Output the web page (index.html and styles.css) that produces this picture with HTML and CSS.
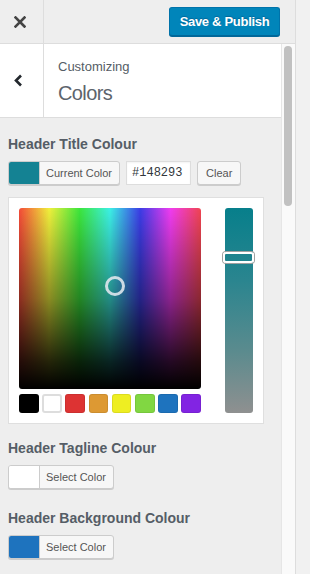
FILE: index.html
```html
<!DOCTYPE html>
<html lang="en">

<head>
    <meta charset="UTF-8">
    <meta name="viewport" content="width=device-width, initial-scale=1.0">
    <title>Customizing Colors</title>
    <link rel="stylesheet" href="styles.css">
</head>

<body>
    <div class="customizer">
        <header class="topbar">
            <button class="close-btn" aria-label="Close">
                <svg width="12" height="12" viewBox="0 0 12 12">
                    <path d="M1.5 1.5 L10.5 10.5 M10.5 1.5 L1.5 10.5" stroke="#444" stroke-width="2.6" stroke-linecap="square" fill="none" />
                </svg>
            </button>
            <button class="publish-btn">Save &amp; Publish</button>
        </header>

        <div class="panel">
            <div class="panel-content">
                <div class="section-head">
                    <button class="back-btn" aria-label="Back">
                        <svg width="9" height="13" viewBox="0 0 9 13">
                            <path d="M7 1.5 L2 6.5 L7 11.5" stroke="#23282d" stroke-width="2.6" fill="none" />
                        </svg>
                    </button>
                    <div class="section-title">
                        <span class="crumb">Customizing</span>
                        <h2>Colors</h2>
                    </div>
                </div>

                <div class="controls">
                    <!-- open picker -->
                    <div class="control is-open">
                        <h3 class="control-label">Header Title Colour</h3>
                        <div class="picker-row">
                            <button class="color-result">
                                <span class="swatch" style="background: #148293"></span>
                                <span class="result-text">Current Color</span>
                            </button>
                            <input class="hex-input" type="text" value="#148293">
                            <button class="small-btn">Clear</button>
                        </div>
                        <div class="picker-box">
                            <div class="picker-main">
                                <div class="picker-square">
                                    <span class="picker-dot"></span>
                                </div>
                                <div class="palette">
                                    <span class="pal" style="background: #000000"></span>
                                    <span class="pal pal-white" style="background: #ffffff"></span>
                                    <span class="pal" style="background: #dd3333"></span>
                                    <span class="pal" style="background: #dd9933"></span>
                                    <span class="pal" style="background: #eeee22"></span>
                                    <span class="pal" style="background: #81d742"></span>
                                    <span class="pal" style="background: #1e73be"></span>
                                    <span class="pal" style="background: #8224e3"></span>
                                </div>
                            </div>
                            <div class="picker-strip">
                                <span class="strip-handle"></span>
                            </div>
                        </div>
                    </div>

                    <div class="control">
                        <h3 class="control-label">Header Tagline Colour</h3>
                        <button class="color-result">
                            <span class="swatch" style="background: #ffffff"></span>
                            <span class="result-text">Select Color</span>
                        </button>
                    </div>

                    <div class="control">
                        <h3 class="control-label">Header Background Colour</h3>
                        <button class="color-result">
                            <span class="swatch" style="background: #1e73be"></span>
                            <span class="result-text">Select Color</span>
                        </button>
                    </div>
                </div>
            </div>

            <div class="scrollbar">
                <div class="scroll-thumb"></div>
            </div>
        </div>
    </div>
</body>

</html>
```

FILE: styles.css
```css
* {
    box-sizing: border-box;
}

body {
    margin: 0;
    height: 574px;
    overflow: hidden;
    background: #f1f1f1;
    font-family: "Liberation Sans", Arial, sans-serif;
}

button {
    font-family: inherit;
    cursor: pointer;
}

.customizer {
    width: 296px;
    height: 574px;
    background: #eee;
    border-right: 1px solid #ddd;
    display: flex;
    flex-direction: column;
}

/* top bar */

.topbar {
    height: 44px;
    flex-shrink: 0;
    border-bottom: 1px solid #ddd;
    display: flex;
    align-items: center;
    justify-content: space-between;
    padding-right: 15px;
}

.close-btn {
    width: 44px;
    height: 43px;
    padding: 0 0 0 14px;
    border: 0;
    border-right: 1px solid #ddd;
    background: transparent;
    display: flex;
    align-items: center;
}

.publish-btn {
    width: 111px;
    height: 29px;
    padding: 0;
    background: #0085ba;
    border: 1px solid #0073aa;
    border-bottom-color: #006799;
    border-radius: 3px;
    box-shadow: 0 1px 0 #006799;
    color: #fff;
    font-size: 13px;
    font-weight: bold;
    letter-spacing: -0.3px;
    text-shadow: 0 -1px 1px #006799;
}

/* panel */

.panel {
    flex: 1;
    min-height: 0;
    display: flex;
}

.panel-content {
    width: 281px;
    flex-shrink: 0;
}

.scrollbar {
    width: 14px;
    background: #fafafa;
    border-left: 1px solid #e6e6e6;
    padding: 2px 0 0 2px;
}

.scroll-thumb {
    width: 8px;
    height: 160px;
    border-radius: 4px;
    background: #c1c1c1;
}

.section-head {
    height: 74px;
    display: flex;
    background: #fff;
    border-bottom: 1px solid #ddd;
}

.back-btn {
    width: 44px;
    padding: 0 0 0 14px;
    border: 0;
    border-right: 1px solid #ddd;
    background: transparent;
    display: flex;
    align-items: center;
}

.section-title {
    padding: 14px 0 0 14px;
    color: #555d66;
}

.crumb {
    display: block;
    font-size: 13px;
    line-height: 18px;
}

.section-title h2 {
    margin: 4px 0 0;
    font-size: 20px;
    line-height: 26px;
    font-weight: normal;
    letter-spacing: -0.6px;
    color: #5d646c;
}

/* controls */

.controls {
    padding: 17px 0 0 8px;
}

.control {
    margin-bottom: 20px;
}

.control.is-open {
    margin-bottom: 15px;
}

.control-label {
    margin: 0 0 8px;
    font-size: 14px;
    line-height: 18px;
    font-weight: bold;
    color: #555d66;
}

.picker-row {
    display: flex;
    gap: 6px;
}

.color-result {
    width: max-content;
    height: 24px;
    padding: 0;
    display: flex;
    align-items: stretch;
    border: 1px solid #ccc;
    border-radius: 3px;
    background: #f7f7f7;
    box-shadow: 0 1px 0 #ccc;
    overflow: hidden;
}

.swatch {
    width: 31px;
    border-right: 1px solid #ccc;
}

.result-text {
    padding: 0 7px 0 6px;
    font-size: 11px;
    line-height: 22px;
    color: #555;
}

.hex-input {
    width: 65px;
    height: 24px;
    padding: 0 5px;
    border: 1px solid #ddd;
    background: #fff;
    box-shadow: inset 0 1px 2px rgba(0, 0, 0, 0.05);
    font-family: "Liberation Mono", "DejaVu Sans Mono", monospace;
    font-size: 12px;
    color: #32373c;
    outline: none;
}

.small-btn {
    height: 24px;
    padding: 0 8px;
    border: 1px solid #ccc;
    border-radius: 3px;
    background: #f7f7f7;
    box-shadow: 0 1px 0 #ccc;
    font-size: 11px;
    color: #555;
}

/* colour picker */

.picker-box {
    width: 256px;
    margin-top: 12px;
    padding: 10px;
    border: 1px solid #dfdfdf;
    background: #fff;
    display: flex;
    gap: 24px;
}

.picker-main {
    width: 182px;
}

.picker-square {
    position: relative;
    height: 181px;
    border-radius: 3px;
    background:
        linear-gradient(to bottom, rgba(0, 0, 0, 0) 0%, rgba(0, 0, 0, 0.42) 50%, rgba(0, 0, 0, 0.85) 85%, #000 100%),
        linear-gradient(to right, #f44a38 0%, #f0f03c 16.6%, #3ce63c 33.3%, #3cf0e6 50%, #3c3ce6 66.6%, #f03cf0 83.3%, #f04450 100%);
}

.picker-dot {
    position: absolute;
    left: 86px;
    top: 68px;
    width: 20px;
    height: 20px;
    border: 3px solid rgba(222, 230, 236, 0.9);
    border-radius: 50%;
}

.palette {
    display: flex;
    gap: 3.5px;
    margin-top: 5px;
}

.pal {
    flex: 1;
    height: 19px;
    border-radius: 3px;
    box-shadow: inset 0 0 0 1px rgba(0, 0, 0, 0.08);
}

.pal-white {
    box-shadow: inset 0 0 0 2px #ddd;
}

.picker-strip {
    position: relative;
    width: 28px;
    border-radius: 3px;
    background: linear-gradient(to bottom, #077f8b 0%, #2a858f 35%, #5b8b8e 70%, #8f9090 100%);
}

.strip-handle {
    position: absolute;
    left: -2px;
    right: -1px;
    top: 44px;
    height: 11px;
    border: 2px solid #fff;
    border-radius: 3px;
    box-shadow: 0 0 0 1px #a0a0a0;
}
```
